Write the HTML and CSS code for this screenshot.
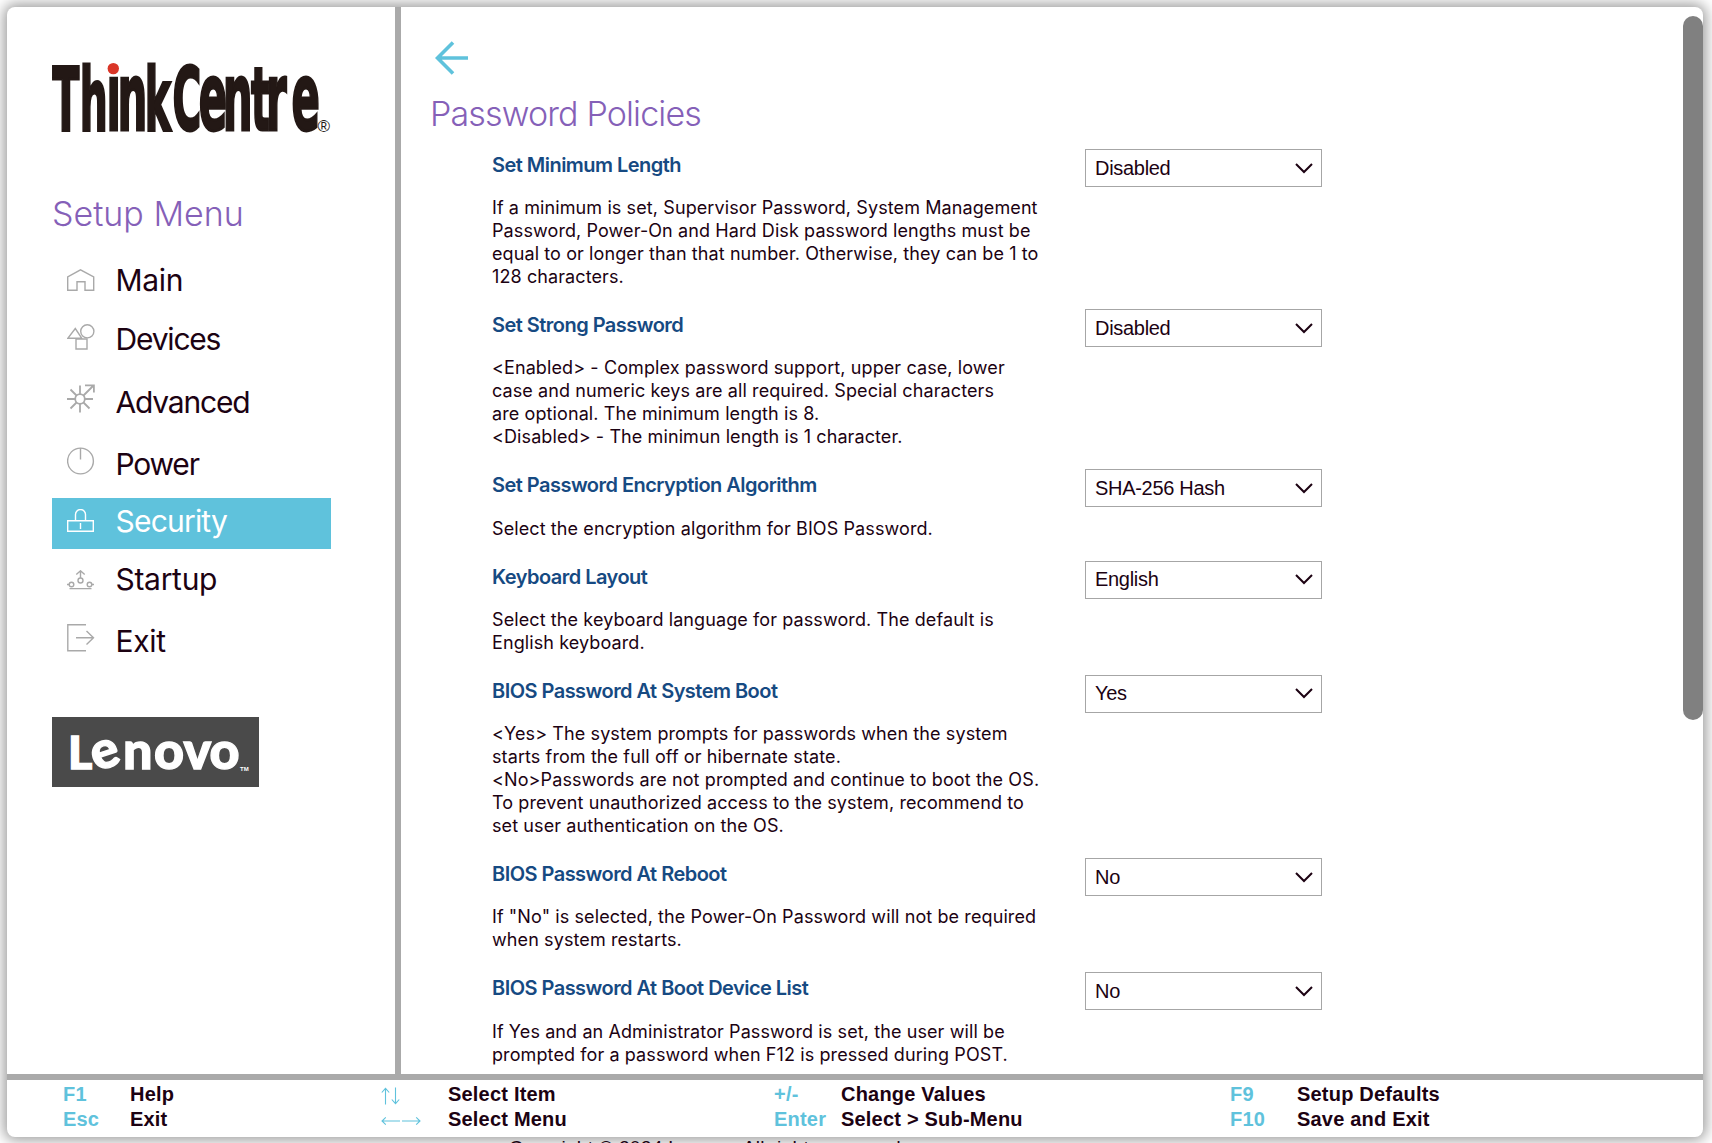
FILE: index.html
```
<!DOCTYPE html>
<html lang="en">
<head>
<meta charset="utf-8">
<title>ThinkCentre Setup</title>
<link rel="stylesheet" href="styles.css">
</head>
<body>
<div class="window">
  <div class="panes">
    <aside class="sidebar">
      <svg class="brand" viewBox="0 0 280 76" width="280" height="76">
        <text class="brand-word" transform="translate(0 71) scale(.446 1)" x="1 62.500 122 147 208 270 329 383 446 480 537">Th<tspan class="tall">in</tspan>kC<tspan class="tall">en</tspan>t<tspan class="tall">re</tspan></text>
        <rect x="55" y="-4" width="14" height="21" fill="#fff"/>
        <circle cx="61.300" cy="9.600" r="5.700" fill="#da3628"/>
        <text class="brand-reg" x="265.500" y="72.500">®</text>
      </svg>
      <h2 class="menu-title">Setup Menu</h2>
      <ul class="menu">
        <li class="item gap-8"><svg class="icon" width="28" height="22" viewBox="0 0 28 22"><path d="M.7 21.300V7.800L13.500.8l13.200 7v13.500H18v-8.500h-8v8.500z"/></svg><span>Main</span></li>
        <li class="item tight gap-12"><svg class="icon" width="28" height="26" viewBox="0 0 28 26"><path d="M.8 14.300h14L8.300 4.500zM9 15h11v10H9z"/><circle cx="20.300" cy="7.300" r="6.600"/></svg><span>Devices</span></li>
        <li class="item tight gap-11"><svg class="icon bold" width="28" height="29" viewBox="0 0 28 29"><circle cx="13" cy="15" r="4.800"/><path d="M13 1.500V10M13 20v8.500M0 15h8M18 15h8M3.500 5.500l6 6M9.500 18.500l-6 6M16.500 18.500l6 6M16.500 11.500L26 2M18 1.300h8.900v7.200"/></svg><span>Advanced</span></li>
        <li class="item tight gap-6"><svg class="icon" width="28" height="28" viewBox="0 0 28 28"><circle cx="13.500" cy="14" r="12.900"/><path d="M13.500 1v11.500"/></svg><span>Power</span></li>
        <li class="item active gap-7"><svg class="icon" width="28" height="23" viewBox="0 0 28 23"><path d="M.7 11.700h25.600v10.600H.7zM8.500 11.500V5.500a5 5 0 0 1 10 0v6M13.500 14v6"/></svg><span>Security</span></li>
        <li class="item gap-11"><svg class="icon" width="28" height="20" viewBox="0 0 28 20"><circle cx="4.500" cy="14.500" r="2.300"/><circle cx="13.500" cy="10.500" r="2.500"/><circle cx="22.500" cy="14.500" r="2.300"/><path d="M0 14.500h2M25 14.500h2M2.500 18.600h22M13.500 8V1M9.300 4.500l4.200-3.700 4.200 3.700"/></svg><span>Startup</span></li>
        <li class="item"><svg class="icon" width="28" height="28" viewBox="0 0 28 28"><path d="M19 .8H.8v26H19M9 13.800h17.500M19.500 7l7 6.800-7 6.800"/></svg><span>Exit</span></li>
      </ul>
      <svg class="vendor" viewBox="0 0 207 70" width="207" height="70">
        <rect width="207" height="70" fill="#4a4a4a"/>
        <text class="vendor-word" y="51.500"><tspan class="cap" x="16">L</tspan><tspan x="44" rotate="-18" y="54.500">e</tspan><tspan x="71 102 131.500 157.500" y="51.500">novo</tspan></text>
        <text class="vendor-tm" x="188" y="54">TM</text>
      </svg>
    </aside>
    <main class="content">
      <svg class="back" width="34" height="34" viewBox="0 0 34 34"><path d="M33 17H3M18 1.500L2.500 17 18 32.500"/></svg>
      <h1 class="title">Password Policies</h1>
      <section class="row">
        <div class="info"><h3>Set Minimum Length</h3><p>If a minimum is set, Supervisor Password, System Management<br>Password, Power-On and Hard Disk password lengths must be<br>equal to or longer than that number. Otherwise, they can be 1 to<br>128 characters.</p></div>
        <div class="select"><span>Disabled</span><svg width="18" height="11" viewBox="0 0 18 11"><path d="M1 1l8 8 8-8"/></svg></div>
      </section>
      <section class="row">
        <div class="info"><h3>Set Strong Password</h3><p>&lt;Enabled&gt; - Complex password support, upper case, lower<br>case and numeric keys are all required. Special characters<br>are optional. The minimum length is 8.<br>&lt;Disabled&gt; - The minimun length is 1 character.</p></div>
        <div class="select"><span>Disabled</span><svg width="18" height="11" viewBox="0 0 18 11"><path d="M1 1l8 8 8-8"/></svg></div>
      </section>
      <section class="row">
        <div class="info"><h3>Set Password Encryption Algorithm</h3><p>Select the encryption algorithm for BIOS Password.</p></div>
        <div class="select"><span>SHA-256 Hash</span><svg width="18" height="11" viewBox="0 0 18 11"><path d="M1 1l8 8 8-8"/></svg></div>
      </section>
      <section class="row">
        <div class="info"><h3>Keyboard Layout</h3><p>Select the keyboard language for password. The default is<br>English keyboard.</p></div>
        <div class="select"><span>English</span><svg width="18" height="11" viewBox="0 0 18 11"><path d="M1 1l8 8 8-8"/></svg></div>
      </section>
      <section class="row">
        <div class="info"><h3>BIOS Password At System Boot</h3><p>&lt;Yes&gt; The system prompts for passwords when the system<br>starts from the full off or hibernate state.<br>&lt;No&gt;Passwords are not prompted and continue to boot the OS.<br>To prevent unauthorized access to the system, recommend to<br>set user authentication on the OS.</p></div>
        <div class="select"><span>Yes</span><svg width="18" height="11" viewBox="0 0 18 11"><path d="M1 1l8 8 8-8"/></svg></div>
      </section>
      <section class="row">
        <div class="info"><h3>BIOS Password At Reboot</h3><p>If "No" is selected, the Power-On Password will not be required<br>when system restarts.</p></div>
        <div class="select"><span>No</span><svg width="18" height="11" viewBox="0 0 18 11"><path d="M1 1l8 8 8-8"/></svg></div>
      </section>
      <section class="row">
        <div class="info"><h3>BIOS Password At Boot Device List</h3><p>If Yes and an Administrator Password is set, the user will be<br>prompted for a password when F12 is pressed during POST.</p></div>
        <div class="select"><span>No</span><svg width="18" height="11" viewBox="0 0 18 11"><path d="M1 1l8 8 8-8"/></svg></div>
      </section>
    </main>
    <div class="scroll"><div class="thumb"></div></div>
  </div>
  <footer class="keys">
    <kbd>F1</kbd><span>Help</span>
    <kbd><svg width="20" height="18" viewBox="0 0 20 18"><path d="M4.500 17.500V2M.8 5.500L4.500 1.300l3.700 4.200M14.500.5V16M10.800 12.500l3.700 4.200 3.700-4.200"/></svg></kbd><span>Select Item</span>
    <kbd>+/-</kbd><span>Change Values</span>
    <kbd>F9</kbd><span>Setup Defaults</span>
    <kbd>Esc</kbd><span>Exit</span>
    <kbd><svg class="low" width="40" height="10" viewBox="0 0 40 10"><path d="M1 5h18M4.800 1.300L1 5l3.800 3.700M21 5h18M35.200 1.300L39 5l-3.800 3.700"/></svg></kbd><span>Select Menu</span>
    <kbd>Enter</kbd><span>Select &gt; Sub-Menu</span>
    <kbd>F10</kbd><span>Save and Exit</span>
  </footer>
</div>
<div class="copyright">Copyright © 2024 Lenovo. All rights reserved.</div>
</body>
</html>
```
FILE: styles.css
```
* { box-sizing: border-box; margin: 0; padding: 0; }
html, body { height: 1143px; overflow: hidden; background: #fff; }
body { padding: 7px 9px 0 7px; font-family: "HK Grotesk", Inter, sans-serif; color: #1c0212; }
.window {
  width: 1696px; height: 1130px; background: #fff; border-radius: 8px;
  box-shadow: 0 0 14px 3px #9a9a9a; overflow: hidden; display: flex; flex-direction: column;
}
.panes { display: flex; height: 1067px; overflow: hidden; }
.sidebar { width: 394px; border-right: 6px solid #aaa; padding: 52px 0 0 45px; flex: none; }
.brand, .vendor { display: block; overflow: visible; }
.brand-word { font: bold 88px "DejaVu Sans", sans-serif; fill: #231815; stroke: #231815; stroke-width: 3px; }
.brand-word .tall { font-size: 94px; }
.brand-reg { font: 17px "Liberation Sans", sans-serif; fill: #231815; }
.menu-title { font-size: 34px; font-weight: 350; line-height: 44px; color: #8560b8; margin-top: 57px; }
.menu { list-style: none; margin-top: 21px; }
.item { display: flex; align-items: baseline; width: 279px; height: 51px; padding: 1px 0 0 15px; gap: 20.5px; font-size: 30px; line-height: 45px; letter-spacing: -.3px; }
.tight { letter-spacing: -1.2px; }
.gap-6 { margin-bottom: 6px; }
.gap-7 { margin-bottom: 7px; }
.gap-8 { margin-bottom: 8px; }
.gap-11 { margin-bottom: 11px; }
.gap-12 { margin-bottom: 12px; }
.active { background: #5fc2dc; color: #fff; letter-spacing: -.8px; }
.icon { flex: none; fill: none; stroke: #a9a9a9; stroke-width: 1.4; }
.bold { stroke-width: 1.8; }
.active .icon { stroke: #fff; }
.vendor { margin-top: 48px; }
.vendor-word { font: 900 52px Lato, sans-serif; fill: #fff; stroke: #fff; stroke-width: 1.3px; }
.vendor-word .cap { font-size: 46.5px; }
.vendor-tm { font: bold 6px "Liberation Sans", sans-serif; fill: #fff; }
.content { width: 1282px; flex: none; padding: 34px 0 0 29px; }
.back { display: block; margin-left: 5px; fill: none; stroke: #5fc2dc; stroke-width: 3.6; }
.title { font-size: 34px; font-weight: 350; line-height: 44px; color: #8560b8; margin-top: 17px; letter-spacing: -.85px; }
.row { display: flex; align-items: flex-start; padding-left: 62px; margin-top: 10px; }
.row + .row { margin-top: 0; }
.info { width: 593px; padding-bottom: 17.2px; }
.info h3 { font-size: 20px; font-weight: 600; line-height: 24px; color: #164a82; padding-top: 7px; height: 51.2px; letter-spacing: -.53px; }
.info p { font-size: 18px; line-height: 22.950px; white-space: nowrap; letter-spacing: .1px; }
.select {
  display: flex; justify-content: space-between; align-items: center; width: 237px; height: 38px; margin-top: 3px;
  border: 1px solid #a6a6a6; padding: 0 8px 0 9px; font: 20px "Liberation Sans", sans-serif; letter-spacing: -.3px;
}
.select svg { fill: none; stroke: #1c0212; stroke-width: 2; }
.scroll { width: 20px; padding-top: 9px; }
.thumb { width: 20px; height: 704px; border-radius: 10px; background: #808080; }
.keys {
  height: 63px; border-top: 6px solid #aaa; padding: 2px 0 0 56px;
  display: grid; grid-template-columns: 67px 251px 67px 326px 67px 389px 67px 300px; grid-auto-rows: 25px;
  font: bold 20px/25px "Liberation Sans", sans-serif; letter-spacing: .2px; white-space: nowrap;
}
.keys kbd { font: inherit; color: #5fc2dc; }
.keys svg { display: block; margin-top: 5px; fill: none; stroke: #5fc2dc; stroke-width: 1.1; }
.keys .low { margin-top: 9px; }
.copyright { margin: 1px 0 0 502px; font: 19.200px/20px "Liberation Sans", sans-serif; position: relative; letter-spacing: .25px; }
```
